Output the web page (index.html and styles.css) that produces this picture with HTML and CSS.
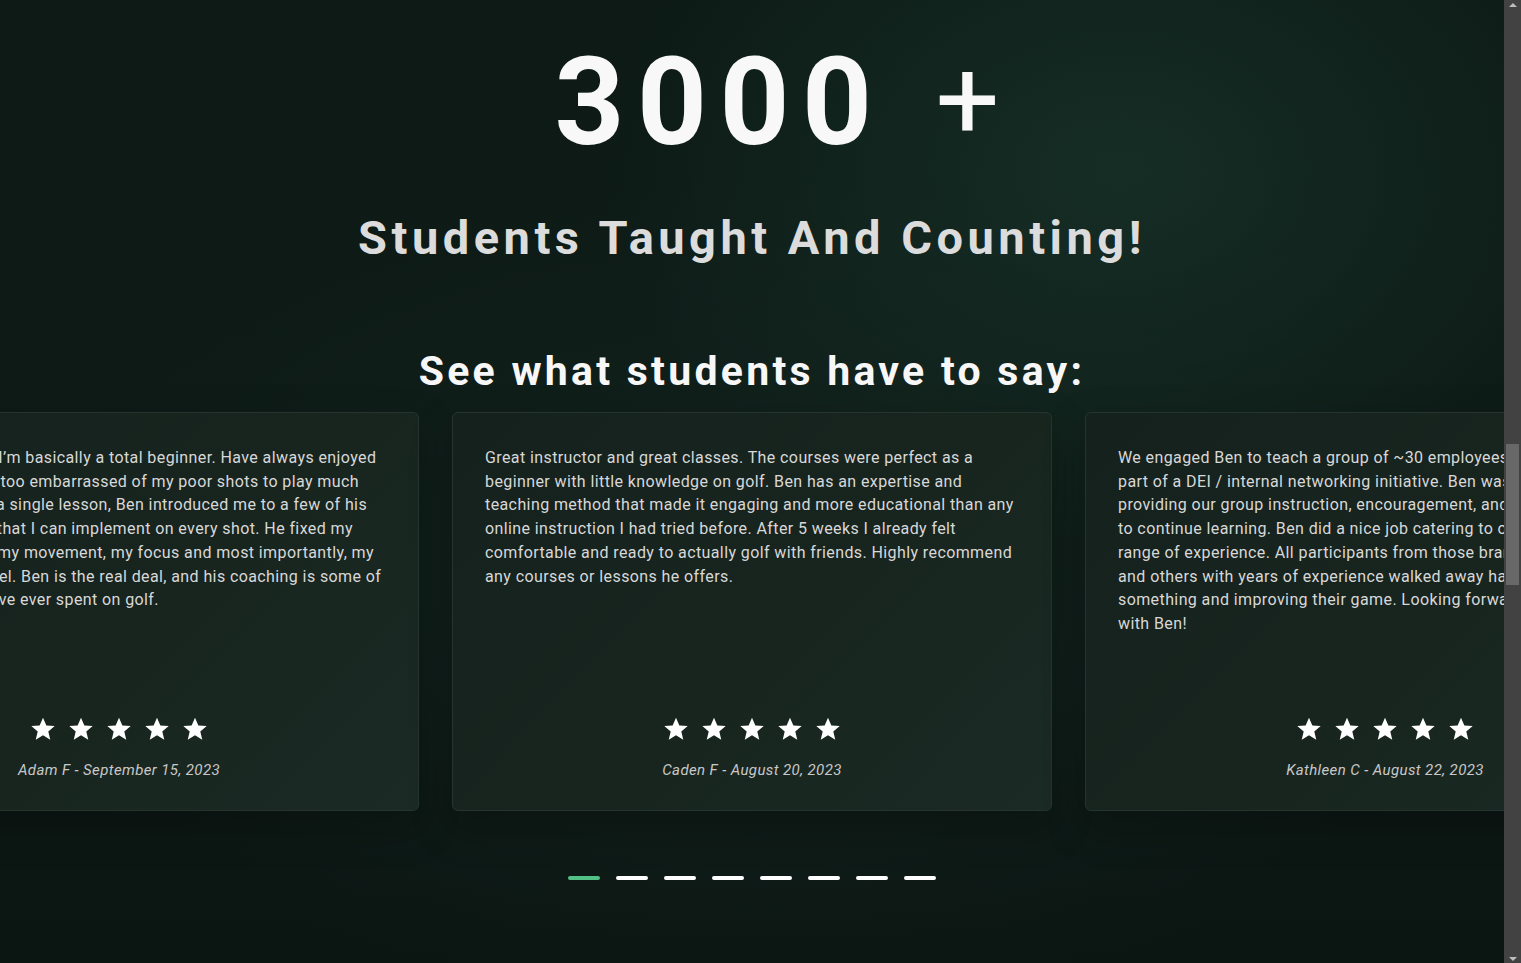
FILE: index.html
```html
<!DOCTYPE html>
<html lang="en">
<head>
<meta charset="utf-8">
<title>Students Taught</title>
<link rel="stylesheet" href="styles.css">
</head>
<body>
<div class="page">
  <section class="stats">
    <div class="count"><span class="count-num">3000</span><span class="count-plus">+</span></div>
    <h2 class="stats-title">Students Taught And Counting!</h2>
  </section>

  <section class="reviews">
    <h3 class="reviews-title">See what students have to say:</h3>
    <div class="track">
      <article class="card">
        <p class="card-text">Before my lessons, I&rsquo;m basically a total beginner. Have always enjoyed golf, but I&rsquo;m always too embarrassed of my poor shots to play much around folks. After a single lesson, Ben introduced me to a few of his core fundamentals that I can implement on every shot. He fixed my technique, my grip, my movement, my focus and most importantly, my total confidence level. Ben is the real deal, and his coaching is some of the best money I have ever spent on golf.</p>
        <div class="stars">
          <svg viewBox="0 0 24 24"><path d="M12 1.6l3.1 7.1 7.7.6-5.9 5 1.8 7.6L12 17.8l-6.7 4.1 1.8-7.6-5.9-5 7.7-.6z"/></svg>
          <svg viewBox="0 0 24 24"><path d="M12 1.6l3.1 7.1 7.7.6-5.9 5 1.8 7.6L12 17.8l-6.7 4.1 1.8-7.6-5.9-5 7.7-.6z"/></svg>
          <svg viewBox="0 0 24 24"><path d="M12 1.6l3.1 7.1 7.7.6-5.9 5 1.8 7.6L12 17.8l-6.7 4.1 1.8-7.6-5.9-5 7.7-.6z"/></svg>
          <svg viewBox="0 0 24 24"><path d="M12 1.6l3.1 7.1 7.7.6-5.9 5 1.8 7.6L12 17.8l-6.7 4.1 1.8-7.6-5.9-5 7.7-.6z"/></svg>
          <svg viewBox="0 0 24 24"><path d="M12 1.6l3.1 7.1 7.7.6-5.9 5 1.8 7.6L12 17.8l-6.7 4.1 1.8-7.6-5.9-5 7.7-.6z"/></svg>
        </div>
        <p class="card-author">Adam F - September 15, 2023</p>
      </article>

      <article class="card">
        <p class="card-text">Great instructor and great classes. The courses were perfect as a beginner with little knowledge on golf. Ben has an expertise and teaching method that made it engaging and more educational than any online instruction I had tried before. After 5 weeks I already felt comfortable and ready to actually golf with friends. Highly recommend any courses or lessons he offers.</p>
        <div class="stars">
          <svg viewBox="0 0 24 24"><path d="M12 1.6l3.1 7.1 7.7.6-5.9 5 1.8 7.6L12 17.8l-6.7 4.1 1.8-7.6-5.9-5 7.7-.6z"/></svg>
          <svg viewBox="0 0 24 24"><path d="M12 1.6l3.1 7.1 7.7.6-5.9 5 1.8 7.6L12 17.8l-6.7 4.1 1.8-7.6-5.9-5 7.7-.6z"/></svg>
          <svg viewBox="0 0 24 24"><path d="M12 1.6l3.1 7.1 7.7.6-5.9 5 1.8 7.6L12 17.8l-6.7 4.1 1.8-7.6-5.9-5 7.7-.6z"/></svg>
          <svg viewBox="0 0 24 24"><path d="M12 1.6l3.1 7.1 7.7.6-5.9 5 1.8 7.6L12 17.8l-6.7 4.1 1.8-7.6-5.9-5 7.7-.6z"/></svg>
          <svg viewBox="0 0 24 24"><path d="M12 1.6l3.1 7.1 7.7.6-5.9 5 1.8 7.6L12 17.8l-6.7 4.1 1.8-7.6-5.9-5 7.7-.6z"/></svg>
        </div>
        <p class="card-author">Caden F - August 20, 2023</p>
      </article>

      <article class="card">
        <p class="card-text">We engaged Ben to teach a group of ~30 employees at our company as part of a DEI / internal networking initiative. Ben was excellent in providing our group instruction, encouragement, and lots of motivation to continue learning. Ben did a nice job catering to our very diverse range of experience. All participants from those brand new to the game and others with years of experience walked away having learned something and improving their game. Looking forward to more lessons with Ben!</p>
        <div class="stars">
          <svg viewBox="0 0 24 24"><path d="M12 1.6l3.1 7.1 7.7.6-5.9 5 1.8 7.6L12 17.8l-6.7 4.1 1.8-7.6-5.9-5 7.7-.6z"/></svg>
          <svg viewBox="0 0 24 24"><path d="M12 1.6l3.1 7.1 7.7.6-5.9 5 1.8 7.6L12 17.8l-6.7 4.1 1.8-7.6-5.9-5 7.7-.6z"/></svg>
          <svg viewBox="0 0 24 24"><path d="M12 1.6l3.1 7.1 7.7.6-5.9 5 1.8 7.6L12 17.8l-6.7 4.1 1.8-7.6-5.9-5 7.7-.6z"/></svg>
          <svg viewBox="0 0 24 24"><path d="M12 1.6l3.1 7.1 7.7.6-5.9 5 1.8 7.6L12 17.8l-6.7 4.1 1.8-7.6-5.9-5 7.7-.6z"/></svg>
          <svg viewBox="0 0 24 24"><path d="M12 1.6l3.1 7.1 7.7.6-5.9 5 1.8 7.6L12 17.8l-6.7 4.1 1.8-7.6-5.9-5 7.7-.6z"/></svg>
        </div>
        <p class="card-author">Kathleen C - August 22, 2023</p>
      </article>
    </div>

    <div class="dots">
      <span class="dot dot-active"></span>
      <span class="dot"></span>
      <span class="dot"></span>
      <span class="dot"></span>
      <span class="dot"></span>
      <span class="dot"></span>
      <span class="dot"></span>
      <span class="dot"></span>
    </div>
  </section>
</div>

<div class="scrollbar">
  <div class="sb-btn"><span class="sb-arrow-up"></span></div>
  <div class="sb-track"><div class="sb-thumb"></div></div>
  <div class="sb-btn"><span class="sb-arrow-down"></span></div>
</div>
</body>
</html>
```

FILE: styles.css
```css
* {
  box-sizing: border-box;
}

html, body {
  margin: 0;
  padding: 0;
  height: 963px;
  overflow: hidden;
}

body {
  display: flex;
  font-family: Roboto, "Noto Sans", sans-serif;
  color: #f5f5f5;
  background: #0c1714;
}

.page {
  flex: 1;
  min-width: 0;
  height: 963px;
  overflow: hidden;
  background:
    radial-gradient(ellipse 520px 380px at 1120px 170px, rgba(24, 52, 42, 0.75), rgba(24, 52, 42, 0) 100%),
    radial-gradient(ellipse 700px 420px at 760px 600px, rgba(22, 40, 34, 0.6), rgba(22, 40, 34, 0) 100%),
    linear-gradient(180deg, #0d1a16 0%, #0e1b17 60%, #0b1512 100%);
}

/* ---------- stats ---------- */
.stats {
  padding-top: 42px;
  text-align: center;
}

.count {
  display: flex;
  justify-content: center;
  align-items: baseline;
  padding-left: 50px;
  line-height: 1;
}

.count-num {
  font-size: 122px;
  font-weight: 700;
  letter-spacing: 12.5px;
  color: #f8f8f8;
}

.count-plus {
  margin-left: 51px;
  font-size: 113px;
  font-weight: 400;
  color: #f8f8f8;
  transform: translateY(-5px);
}

.stats-title {
  margin: 50px 0 0;
  font-size: 47px;
  line-height: 1;
  font-weight: 700;
  letter-spacing: 4.5px;
  color: #dcdcdc;
}

/* ---------- reviews ---------- */
.reviews {
  padding-top: 90px;
}

.reviews-title {
  margin: 0;
  text-align: center;
  font-size: 41px;
  line-height: 1;
  font-weight: 700;
  letter-spacing: 3.25px;
  color: #f7f7f7;
}

.track {
  display: flex;
  justify-content: center;
  gap: 33px;
  margin-top: 20px;
}

.card {
  flex: 0 0 600px;
  height: 399px;
  display: flex;
  flex-direction: column;
  padding: 33px 32px 30px;
  border: 1px solid #25342f;
  border-radius: 6px;
  background: linear-gradient(135deg, #15211d 0%, #18251f 55%, #1b2a25 100%);
  box-shadow: 0 16px 40px rgba(0, 0, 0, 0.25);
}

.card-text {
  flex: 1;
  margin: 0;
  font-size: 16px;
  line-height: 23.7px;
  letter-spacing: 0.4px;
  color: #d8d8d8;
}

.stars {
  display: flex;
  justify-content: center;
  gap: 12px;
}

.stars svg {
  width: 26px;
  height: 26px;
  fill: #ffffff;
}

.card-author {
  margin: 18px 0 0;
  text-align: center;
  font-size: 15px;
  line-height: 20px;
  font-style: italic;
  letter-spacing: 0.4px;
  color: #c8c8c8;
}

.dots {
  display: flex;
  justify-content: center;
  gap: 16px;
  margin-top: 65px;
}

.dot {
  width: 32px;
  height: 4px;
  border-radius: 2px;
  background: #ffffff;
}

.dot-active {
  background: #52c186;
}

/* ---------- scrollbar ---------- */
.scrollbar {
  flex: 0 0 17px;
  height: 963px;
  display: flex;
  flex-direction: column;
  background: #424242;
}

.sb-btn {
  height: 17px;
  display: flex;
  align-items: center;
  justify-content: center;
}

.sb-arrow-up {
  width: 0;
  height: 0;
  border-left: 4px solid transparent;
  border-right: 4px solid transparent;
  border-bottom: 4px solid #bdbdbd;
  margin-top: -8px;
}

.sb-arrow-down {
  width: 0;
  height: 0;
  border-left: 4px solid transparent;
  border-right: 4px solid transparent;
  border-top: 4px solid #bdbdbd;
  margin-bottom: -8px;
}

.sb-track {
  flex: 1;
  padding: 0 2px;
}

.sb-thumb {
  margin-top: 427px;
  height: 141px;
  background: #686868;
}
```
